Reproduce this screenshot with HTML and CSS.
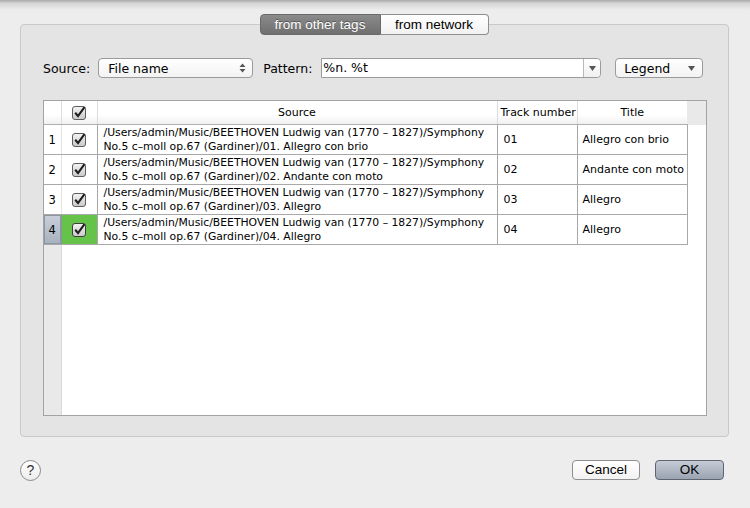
FILE: index.html
```html
<!DOCTYPE html>
<html>
<head>
<meta charset="utf-8">
<link rel="stylesheet" href="styles.css">
</head>
<body>
<div class="shadow"></div>
<div class="group">
  <div class="tabs">
    <div class="tab sel">from other tags</div>
    <div class="tab">from network</div>
  </div>
  <div class="toolbar">
    <span class="label">Source:</span>
    <div class="popup src"><span>File name</span>
      <svg class="updown" width="7" height="10" viewBox="0 0 7 10"><path d="M0.5 4 L3.5 0.5 L6.5 4 Z M0.5 6 L3.5 9.5 L6.5 6 Z" fill="#555"/></svg>
    </div>
    <span class="label pat">Pattern:</span>
    <div class="combo"><span class="combo-text">%n. %t</span><span class="combo-btn"><svg width="7" height="5" viewBox="0 0 7 5"><path d="M0 0 L7 0 L3.5 5 Z" fill="#555"/></svg></span></div>
    <div class="popup legend"><span>Legend</span><svg width="7" height="5" viewBox="0 0 7 5"><path d="M0 0 L7 0 L3.5 5 Z" fill="#555"/></svg></div>
  </div>
  <div class="tablebox">
    <table class="grid">
      <colgroup><col class="c-num"><col class="c-chk"><col class="c-src"><col class="c-trk"><col class="c-ttl"><col class="c-fill"></colgroup>
      <thead>
        <tr>
          <th class="h-num"></th>
          <th class="h-chk"><svg class="cb" width="14" height="14" viewBox="0 0 14 14"><defs><linearGradient id="g0" x1="0" y1="0" x2="0" y2="1"><stop offset="0" stop-color="#f4f4f4"/><stop offset="1" stop-color="#c9c9c9"/></linearGradient></defs><rect x="0.5" y="0.5" width="13" height="13" rx="2.5" fill="url(#g0)" stroke="#5e5e5e"/><path d="M3.2 6.8 L6 10 L12.5 1.2" fill="none" stroke="#1e1e1e" stroke-width="2.1"/></svg></th>
          <th class="h-src">Source</th>
          <th class="h-trk">Track number</th>
          <th class="h-ttl">Title</th>
          <th class="h-fill"></th>
        </tr>
      </thead>
      <tbody>
        <tr>
          <td class="num">1</td>
          <td class="chk"><svg class="cb" width="14" height="14" viewBox="0 0 14 14"><rect x="0.5" y="0.5" width="13" height="13" rx="2.5" fill="url(#g0)" stroke="#5e5e5e"/><path d="M3.2 6.8 L6 10 L12.5 1.2" fill="none" stroke="#1e1e1e" stroke-width="2.1"/></svg></td>
          <td class="src">/Users/admin/Music/BEETHOVEN Ludwig van (1770 – 1827)/Symphony<br>No.5 c–moll op.67 (Gardiner)/01. Allegro con brio</td>
          <td class="trk">01</td>
          <td class="ttl">Allegro con brio</td>
          <td class="fill"></td>
        </tr>
        <tr>
          <td class="num">2</td>
          <td class="chk"><svg class="cb" width="14" height="14" viewBox="0 0 14 14"><rect x="0.5" y="0.5" width="13" height="13" rx="2.5" fill="url(#g0)" stroke="#5e5e5e"/><path d="M3.2 6.8 L6 10 L12.5 1.2" fill="none" stroke="#1e1e1e" stroke-width="2.1"/></svg></td>
          <td class="src">/Users/admin/Music/BEETHOVEN Ludwig van (1770 – 1827)/Symphony<br>No.5 c–moll op.67 (Gardiner)/02. Andante con moto</td>
          <td class="trk">02</td>
          <td class="ttl">Andante con moto</td>
          <td class="fill"></td>
        </tr>
        <tr>
          <td class="num">3</td>
          <td class="chk"><svg class="cb" width="14" height="14" viewBox="0 0 14 14"><rect x="0.5" y="0.5" width="13" height="13" rx="2.5" fill="url(#g0)" stroke="#5e5e5e"/><path d="M3.2 6.8 L6 10 L12.5 1.2" fill="none" stroke="#1e1e1e" stroke-width="2.1"/></svg></td>
          <td class="src">/Users/admin/Music/BEETHOVEN Ludwig van (1770 – 1827)/Symphony<br>No.5 c–moll op.67 (Gardiner)/03. Allegro</td>
          <td class="trk">03</td>
          <td class="ttl">Allegro</td>
          <td class="fill"></td>
        </tr>
        <tr>
          <td class="num selnum">4</td>
          <td class="chk green"><svg class="cb" width="14" height="14" viewBox="0 0 14 14"><rect x="0.5" y="0.5" width="13" height="13" rx="2.5" fill="url(#g0)" stroke="#3e3e3e"/><path d="M3.2 6.8 L6 10 L12.5 1.2" fill="none" stroke="#1e1e1e" stroke-width="2.1"/></svg></td>
          <td class="src">/Users/admin/Music/BEETHOVEN Ludwig van (1770 – 1827)/Symphony<br>No.5 c–moll op.67 (Gardiner)/04. Allegro</td>
          <td class="trk">04</td>
          <td class="ttl">Allegro</td>
          <td class="fill"></td>
        </tr>
        <tr class="rest">
          <td class="num empty"></td>
          <td colspan="5" class="blank"></td>
        </tr>
      </tbody>
    </table>
  </div>
</div>
<div class="footer">
  <div class="help">?</div>
  <div class="spacer"></div>
  <div class="btn cancel">Cancel</div>
  <div class="btn ok">OK</div>
</div>
</body>
</html>
```
FILE: styles.css
```css
html, body {
  margin: 0;
  padding: 0;
}
body {
  width: 750px;
  height: 508px;
  background: #ededed;
  font-family: "DejaVu Sans", "Liberation Sans", sans-serif;
  font-size: 11px;
  color: #000;
  overflow: hidden;
  position: relative;
}
.shadow {
  height: 10px;
  background: linear-gradient(#a9a9a9, #d6d6d6 35%, #ededed);
  margin-bottom: 14px;
}
.group {
  margin: 0 21px 0 20px;
  height: 411px;
  border: 1px solid #c9c9c9;
  border-radius: 4px;
  background: #e4e4e4;
  display: flex;
  flex-direction: column;
}
.tabs {
  display: flex;
  justify-content: center;
  margin-top: -11px;
  margin-left: -1px;
}
.tab {
  height: 19px;
  line-height: 19px;
  border: 1px solid #8e8e8e;
  font-family: "Liberation Sans", sans-serif;
  font-size: 13.5px;
  padding: 0 12px;
  background: linear-gradient(#ffffff, #f1f1f1);
  border-radius: 0 4px 4px 0;
  border-left: none;
  width: 83px;
  text-align: center;
}
.tab.sel {
  background: linear-gradient(#8b8b8b, #6f6f6f);
  color: #fff;
  border-radius: 4px 0 0 4px;
  border-left: 1px solid #777;
  border-color: #6a6a6a;
  width: 95px;
  text-shadow: 0 -1px 0 #555;
}
.toolbar {
  display: flex;
  align-items: center;
  margin-top: 23px;
  padding-left: 22px;
  height: 20px;
}
.label {
  font-size: 12.5px;
  margin-right: 8px;
}
.label.pat { margin-left: 10px; margin-right: 9px; }
.popup {
  box-sizing: border-box;
  height: 20px;
  border: 1px solid #9b9b9b;
  border-radius: 4px;
  background: linear-gradient(#ffffff, #f3f3f3);
  display: flex;
  align-items: center;
  justify-content: space-between;
  font-size: 12.5px;
  padding: 0 6px 0 9px;
}
.popup.src { width: 155px; }
.popup.legend { width: 88px; margin-left: 14px; padding-left: 8px; padding-right: 7px; }
.combo {
  box-sizing: border-box;
  width: 280px;
  height: 20px;
  display: flex;
  border: 1px solid #9b9b9b;
  border-radius: 0 4px 4px 0;
  background: #fff;
}
.combo-text {
  flex: 1;
  font-size: 12.5px;
  line-height: 18px;
  padding-left: 1px;
}
.combo-btn {
  width: 16px;
  border-left: 1px solid #b8b8b8;
  background: linear-gradient(#ffffff, #f0f0f0);
  border-radius: 0 4px 4px 0;
  display: flex;
  align-items: center;
  justify-content: center;
}
.tablebox {
  margin: 22px 0 0 22px;
  width: 662px;
  height: 314px;
  border: 1px solid #a3a3a3;
  background: #fff;
  display: flex;
}
.grid {
  border-collapse: collapse;
  table-layout: fixed;
  width: 662px;
  height: 314px;
}
.c-num { width: 17px; }
.c-chk { width: 36px; }
.c-src { width: 400px; }
.c-trk { width: 80px; }
.c-ttl { width: 110px; }
.c-fill { width: 19px; }
th {
  height: 23px;
  padding: 0;
  font-weight: normal;
  font-size: 11px;
  background: linear-gradient(#ffffff, #ffffff 60%, #f0f0f0);
  border-left: 1px solid #dcdcdc;
  border-bottom: 1px solid #b0b0b0;
}
th.h-num { border-left: none; }
th.h-chk { text-align: center; }
th.h-chk .cb { display: block; margin: 1px auto 0; }
th.h-src { text-align: center; }
th.h-trk { text-align: left; padding-left: 3px; }
th.h-ttl { text-align: center; }
th.h-fill { background: #e9e9e9; border-bottom: none; border-left: none; }
td {
  height: 29px;
  padding: 0;
  border-bottom: 1px solid #a8a8a8;
  border-left: 1px solid #a8a8a8;
  vertical-align: middle;
  white-space: nowrap;
  overflow: hidden;
}
td.num {
  border-left: none;
  text-align: center;
  font-size: 11.5px;
  border-right: 1px solid #e2e2e2;
}
td.chk { text-align: center; border-left: none; }
td.chk .cb { display: block; margin: 0 auto; }
td.green { background: #66c34a; }
td.selnum {
  background: linear-gradient(#c7cfdb, #a6b0be);
  border-right: 1px solid #8a93a0;
  box-shadow: inset 0 0 0 1px #8d96a3;
}
td.src { padding-left: 6px; line-height: 14px; font-size: 10.8px; }
td.trk { padding-left: 6px; }
td.ttl { padding-left: 5px; border-right: 1px solid #a8a8a8; }
td.fill { border-bottom: none; border-left: none; }
tr.rest td { height: auto; border: none; }
tr.rest td.empty { background: #e9e9e9; border-right: 1px solid #dadada; }
.footer {
  display: flex;
  align-items: center;
  margin-top: 22px;
  padding: 0 26px 0 20px;
  height: 22px;
}
.help {
  box-sizing: border-box;
  width: 21px;
  height: 21px;
  border-radius: 50%;
  border: 1px solid #8a8a8a;
  background: linear-gradient(#ffffff, #ececec);
  font-family: "Liberation Sans", sans-serif;
  font-size: 14px;
  line-height: 19px;
  text-align: center;
  color: #333;
}
.spacer { flex: 1; }
.btn {
  box-sizing: border-box;
  height: 20px;
  border-radius: 4px;
  border: 1px solid #8f8f8f;
  font-family: "Liberation Sans", sans-serif;
  font-size: 13.5px;
  line-height: 18px;
  text-align: center;
}
.cancel { width: 68px; background: linear-gradient(#ffffff, #f2f2f2); margin-right: 15px; }
.ok { width: 69px; background: linear-gradient(#c6ccd6, #9aa3b1); border-color: #5f6570; }
```
